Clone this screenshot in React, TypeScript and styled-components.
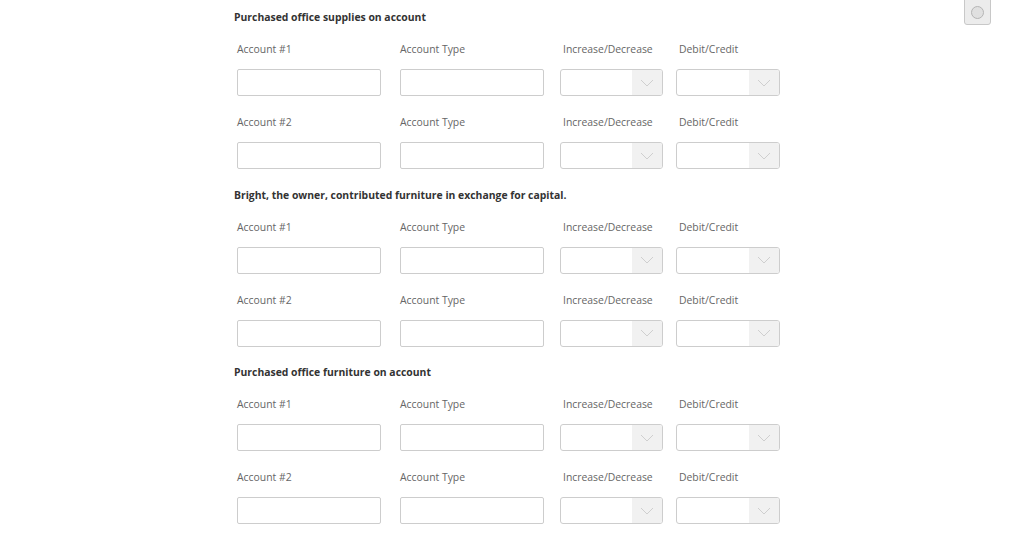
import styled, { createGlobalStyle } from 'styled-components';

const GlobalStyle = createGlobalStyle`
  html, body {
    margin: 0;
    padding: 0;
    background: #ffffff;
  }
  body {
    font-family: 'Open Sans', 'Liberation Sans', sans-serif;
    color: #333;
  }
`;

interface Transaction {
  title: string;
}

const transactions: Transaction[] = [
  { title: 'Purchased office supplies on account' },
  { title: 'Bright, the owner, contributed furniture in exchange for capital.' },
  { title: 'Purchased office furniture on account' },
];

const columns = [
  { label: 'Account #', kind: 'text' },
  { label: 'Account Type', kind: 'text' },
  { label: 'Increase/Decrease', kind: 'select' },
  { label: 'Debit/Credit', kind: 'select' },
];

const Chevron = () => (
  <svg width="14" height="8" viewBox="0 0 14 8" fill="none">
    <path d="M1 1 L7 7 L13 1" stroke="#cfcfcf" strokeWidth="1" />
  </svg>
);

const Select = ({ width }: { width: number }) => (
  <SelectBox $width={width}>
    <SelectValue />
    <ArrowCell>
      <Chevron />
    </ArrowCell>
  </SelectBox>
);

const App = () => {
  return (
    <Page>
      <GlobalStyle />
      <ToggleButton>
        <ToggleDot />
      </ToggleButton>
      {transactions.map((t) => (
        <Section key={t.title}>
          <Title>{t.title}</Title>
          {[1, 2].map((n) => (
            <EntryRow key={n}>
              {columns.map((c) => (
                <Label key={c.label} $indent={c.kind === 'select' ? 3 : 0}>
                  {c.label === 'Account #' ? `Account #${n}` : c.label}
                </Label>
              ))}
              <TextInput />
              <TextInput />
              <Select width={103} />
              <Select width={104} />
            </EntryRow>
          ))}
        </Section>
      ))}
    </Page>
  );
};

export default App;

const Page = styled.div`
  position: relative;
  width: 1024px;
  min-height: 541px;
  box-sizing: border-box;
  padding: 10px 0 0 234px;
`;

const Section = styled.div`
  display: flex;
  flex-direction: column;
  margin-bottom: 18.5px;
`;

const Title = styled.div`
  font-size: 10.4px;
  line-height: 14px;
  font-weight: 700;
  color: #333;
  margin-bottom: 18px;
`;

const EntryRow = styled.div`
  display: grid;
  grid-template-columns: 163px 160px 116px 104px;
  grid-template-rows: 14px 27px;
  row-gap: 13px;
  margin-left: 3px;

  & + & {
    margin-top: 19px;
  }
`;

const Label = styled.div<{ $indent: number }>`
  font-size: 10.4px;
  line-height: 14px;
  color: #666;
  padding-left: ${(p) => p.$indent}px;
  white-space: nowrap;
`;

const TextInput = styled.div`
  width: 144px;
  height: 27px;
  box-sizing: border-box;
  border: 1px solid #cdcdcd;
  border-radius: 2px;
  background: #fff;
`;

const SelectBox = styled.div<{ $width: number }>`
  width: ${(p) => p.$width}px;
  height: 27px;
  box-sizing: border-box;
  border: 1px solid #cdcdcd;
  border-radius: 3px;
  background: #fff;
  display: flex;
  overflow: hidden;
`;

const SelectValue = styled.div`
  flex: 1;
`;

const ArrowCell = styled.div`
  width: 30px;
  background: #f1f1f1;
  display: flex;
  align-items: center;
  justify-content: center;
`;

const ToggleButton = styled.div`
  position: absolute;
  top: -6px;
  left: 964px;
  width: 27px;
  height: 31px;
  box-sizing: border-box;
  border: 1px solid #c8c8c8;
  border-radius: 3px;
  background: #ececec;
  display: flex;
  align-items: flex-end;
  justify-content: center;
  padding-bottom: 5px;
`;

const ToggleDot = styled.div`
  width: 13px;
  height: 13px;
  box-sizing: border-box;
  border-radius: 50%;
  border: 1px solid #b5b5b5;
  background: #e0e0e0;
`;
